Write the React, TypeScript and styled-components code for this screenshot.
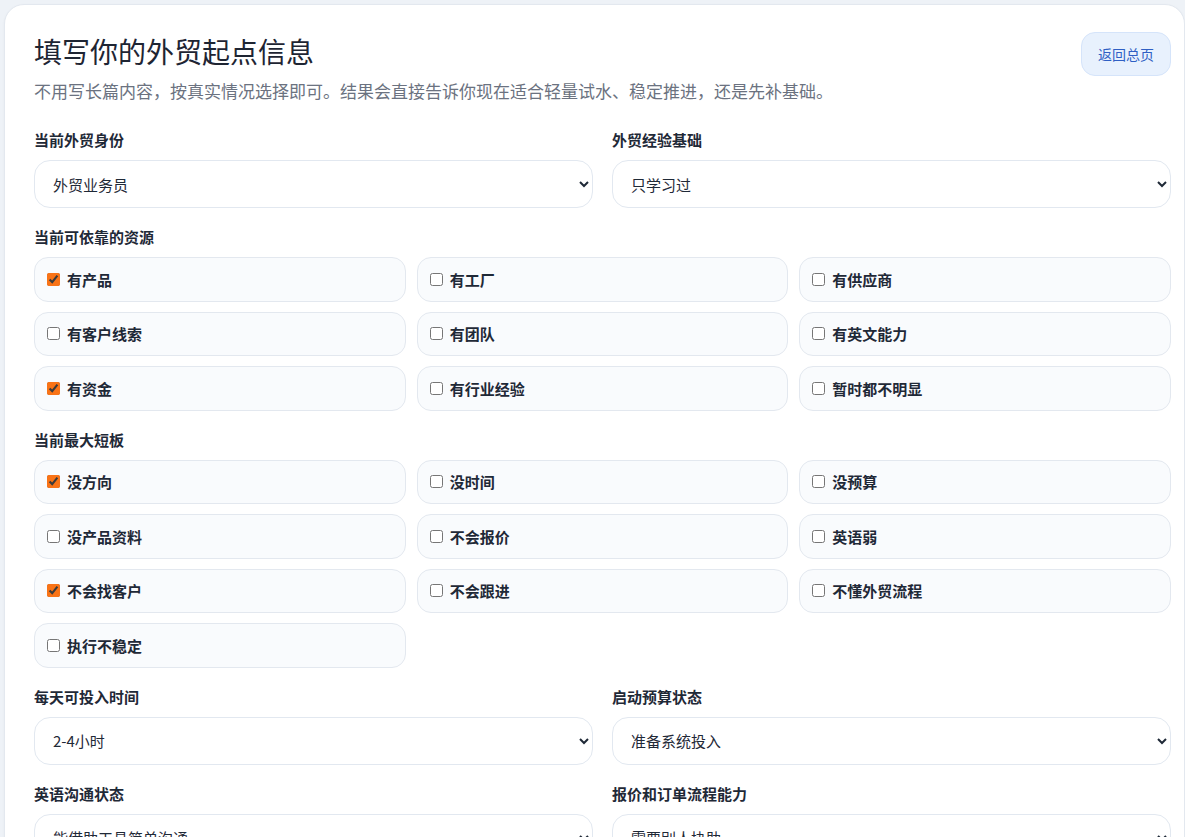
import React from "react";
import styled, { createGlobalStyle } from "styled-components";

const GlobalStyle = createGlobalStyle`
  html, body {
    margin: 0;
    padding: 0;
    overflow: hidden;
    background: #eef2f7;
  }
  body {
    font-family: "Noto Sans CJK SC", "Noto Sans", "Liberation Sans", sans-serif;
    color: #1f2937;
  }
  * { box-sizing: border-box; }
`;

const Page = styled.div`
  padding: 4px 0 0 4px;
  min-height: 837px;
`;

const Card = styled.section`
  background: #ffffff;
  border: 1px solid #e3e8ef;
  border-radius: 20px;
  padding: 29px 13px 40px 29px;
  box-shadow: 0 1px 3px rgba(15, 23, 42, 0.04);
`;

const Header = styled.header`
  display: flex;
  justify-content: space-between;
  align-items: flex-start;
  margin-bottom: 25px;
`;

const HeadText = styled.div`
  display: flex;
  flex-direction: column;
`;

const Title = styled.h1`
  margin: 0;
  font-size: 28px;
  line-height: 34px;
  font-weight: 400;
  color: #1e2533;
`;

const Subtitle = styled.p`
  margin: 10px 0 0;
  font-size: 17px;
  line-height: 26px;
  color: #6b7280;
`;

const BackButton = styled.button`
  height: 44px;
  padding: 0 16px;
  margin-top: -2px;
  border-radius: 14px;
  border: 1px solid #d5e4fa;
  background: #e8f1fd;
  color: #2f5fc4;
  font-family: inherit;
  font-size: 14px;
  cursor: pointer;
`;

const Form = styled.div`
  display: flex;
  flex-direction: column;
  gap: 18px;
`;

const TwoCol = styled.div`
  display: grid;
  grid-template-columns: 1fr 1fr;
  column-gap: 19px;
`;

const Field = styled.div`
  display: flex;
  flex-direction: column;
  gap: 10px;
`;

const Label = styled.div`
  font-size: 15px;
  line-height: 21px;
  font-weight: 700;
  color: #1f2937;
`;

const Select = styled.select`
  height: 48px;
  width: 100%;
  border: 1px solid #e2e8f0;
  border-radius: 16px;
  background: #ffffff;
  padding: 0 6px 0 14px;
  font-family: inherit;
  font-size: 15px;
  color: #1f2937;
  outline: none;
`;

const OptionGrid = styled.div`
  display: grid;
  grid-template-columns: repeat(3, 1fr);
  column-gap: 11px;
  row-gap: 10px;
`;

const OptionCard = styled.label`
  display: flex;
  align-items: center;
  gap: 7px;
  height: 44.5px;
  padding: 0 12px;
  border: 1px solid #e3e8ef;
  border-radius: 14px;
  background: #f9fbfd;
  font-size: 15px;
  font-weight: 700;
  color: #1f2937;
  cursor: pointer;
`;

const Check = styled.input`
  margin: 0;
  width: 13px;
  height: 13px;
  accent-color: #f97316;
`;

type Opt = { label: string; checked?: boolean };

const resources: Opt[] = [
  { label: "有产品", checked: true },
  { label: "有工厂" },
  { label: "有供应商" },
  { label: "有客户线索" },
  { label: "有团队" },
  { label: "有英文能力" },
  { label: "有资金", checked: true },
  { label: "有行业经验" },
  { label: "暂时都不明显" },
];

const weaknesses: Opt[] = [
  { label: "没方向", checked: true },
  { label: "没时间" },
  { label: "没预算" },
  { label: "没产品资料" },
  { label: "不会报价" },
  { label: "英语弱" },
  { label: "不会找客户", checked: true },
  { label: "不会跟进" },
  { label: "不懂外贸流程" },
  { label: "执行不稳定" },
];

function Options({ items }: { items: Opt[] }) {
  return (
    <OptionGrid>
      {items.map((o) => (
        <OptionCard key={o.label}>
          <Check type="checkbox" defaultChecked={!!o.checked} />
          {o.label}
        </OptionCard>
      ))}
    </OptionGrid>
  );
}

function SelectField({ label, value, options }: { label: string; value: string; options: string[] }) {
  return (
    <Field>
      <Label>{label}</Label>
      <Select defaultValue={value}>
        {options.map((o) => (
          <option key={o} value={o}>
            {o}
          </option>
        ))}
      </Select>
    </Field>
  );
}

export default function App() {
  return (
    <>
      <GlobalStyle />
      <Page>
        <Card>
          <Header>
            <HeadText>
              <Title>填写你的外贸起点信息</Title>
              <Subtitle>
                不用写长篇内容，按真实情况选择即可。结果会直接告诉你现在适合轻量试水、稳定推进，还是先补基础。
              </Subtitle>
            </HeadText>
            <BackButton>返回总页</BackButton>
          </Header>
          <Form>
            <TwoCol>
              <SelectField
                label="当前外贸身份"
                value="外贸业务员"
                options={["外贸业务员", "工厂老板", "贸易公司", "个人创业", "跨境卖家"]}
              />
              <SelectField
                label="外贸经验基础"
                value="只学习过"
                options={["完全没有", "只学习过", "做过一两年", "三年以上"]}
              />
            </TwoCol>
            <Field>
              <Label>当前可依靠的资源</Label>
              <Options items={resources} />
            </Field>
            <Field>
              <Label>当前最大短板</Label>
              <Options items={weaknesses} />
            </Field>
            <TwoCol>
              <SelectField
                label="每天可投入时间"
                value="2-4小时"
                options={["1小时以内", "1-2小时", "2-4小时", "4小时以上"]}
              />
              <SelectField
                label="启动预算状态"
                value="准备系统投入"
                options={["几乎没有预算", "少量试水", "准备系统投入"]}
              />
            </TwoCol>
            <TwoCol>
              <SelectField
                label="英语沟通状态"
                value="能借助工具简单沟通"
                options={["基本不会", "能借助工具简单沟通", "可以独立沟通"]}
              />
              <SelectField
                label="报价和订单流程能力"
                value="需要别人协助"
                options={["完全不懂", "需要别人协助", "可以独立完成"]}
              />
            </TwoCol>
          </Form>
        </Card>
      </Page>
    </>
  );
}
